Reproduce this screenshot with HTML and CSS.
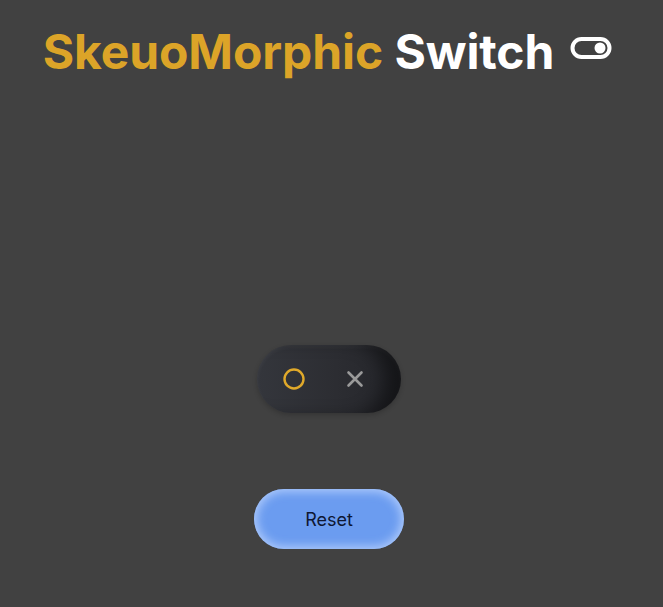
FILE: index.html
```html
<!DOCTYPE html>
<html>
<head>
<meta charset="utf-8">
<link rel="stylesheet" href="styles.css">
</head>
<body>
<header class="title">
  <h1><span class="gold">SkeuoMorphic</span> <span class="white">Switch</span></h1>
  <svg class="toggle-icon" width="42" height="24" viewBox="0 0 42 24">
    <rect x="2.5" y="3" width="37" height="18" rx="9" fill="none" stroke="#fff" stroke-width="4"/>
    <circle cx="30" cy="12" r="5.5" fill="#fff"/>
  </svg>
</header>
<main class="stage">
  <div class="switch">
    <span class="opt on">
      <svg width="24" height="24" viewBox="0 0 24 24"><circle cx="12" cy="12" r="9.5" fill="none" stroke="#e0a92a" stroke-width="2.4"/></svg>
    </span>
    <span class="opt off">
      <svg width="20" height="20" viewBox="0 0 20 20"><path d="M3.5 3.5L16.5 16.5M16.5 3.5L3.5 16.5" stroke="#9a9a9a" stroke-width="2.6" stroke-linecap="round"/></svg>
    </span>
  </div>
  <button class="reset">Reset</button>
</main>
</body>
</html>
```
FILE: styles.css
```css
html, body { margin: 0; padding: 0; }
body {
  background: #414141;
  width: 663px;
  height: 607px;
  font-family: "Open Sans", "DejaVu Sans", sans-serif;
  overflow: hidden;
}
.title {
  display: flex;
  align-items: center;
  justify-content: center;
  gap: 16px;
  padding-top: 23px;
  padding-right: 8px;
}
.title h1 {
  margin: 0;
  font-family: "Inter", "DejaVu Sans", sans-serif;
  font-weight: 700;
  font-size: 48px;
  line-height: 58px;
  letter-spacing: -0.1px;
}
.gold { color: #dca428; }
.white { color: #ffffff; }
.toggle-icon { display: block; margin-top: -8px; }
.stage {
  display: flex;
  flex-direction: column;
  align-items: center;
  padding-top: 264px;
  padding-right: 5px;
  gap: 76px;
}
.switch {
  width: 144px;
  height: 68px;
  border-radius: 34px;
  background: linear-gradient(90deg, #34363c 0%, #2c2d32 55%, #24252a 100%);
  box-shadow: inset -22px 0 18px -6px rgba(0,0,0,0.45), inset 0 2px 4px rgba(255,255,255,0.05), 0 2px 5px rgba(0,0,0,0.2);
  display: flex;
  align-items: center;
  padding-left: 25px;
  box-sizing: border-box;
  gap: 39px;
}
.opt { display: flex; align-items: center; justify-content: center; }
.opt svg { display: block; }
.reset {
  width: 150px;
  height: 60px;
  border-radius: 30px;
  border: none;
  background: #6b9cf0;
  box-shadow: inset 0 0 10px 3px rgba(200, 220, 255, 0.7);
  font-family: "Inter", "DejaVu Sans", sans-serif;
  font-weight: 400;
  font-size: 18px;
  color: #0e1733;
  padding: 0;
}
```
